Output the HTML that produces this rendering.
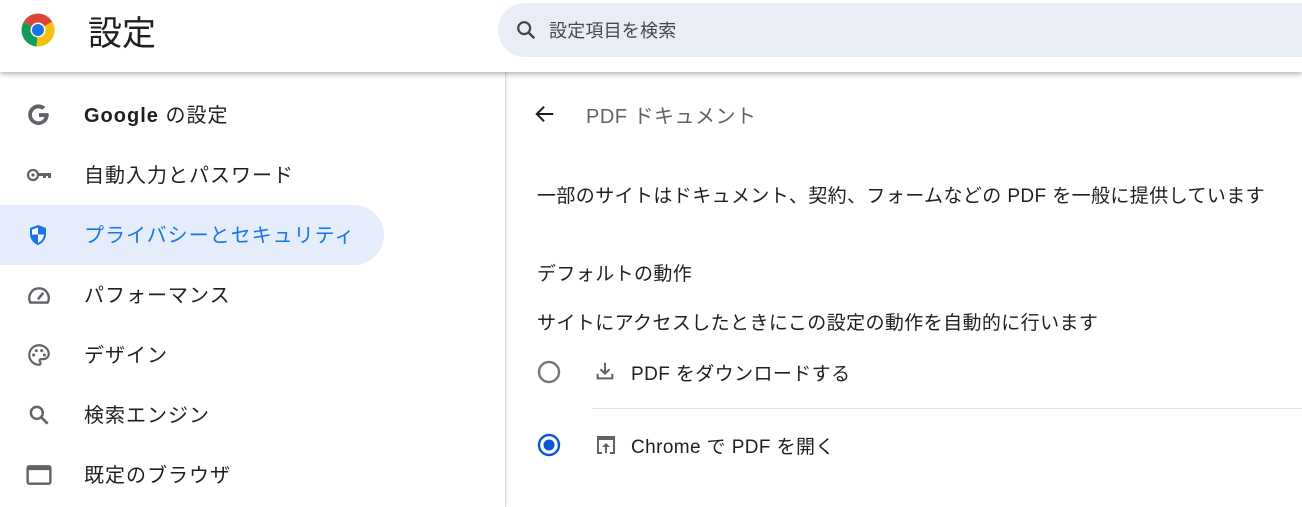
<!DOCTYPE html>
<html><head><meta charset="utf-8"><style>
*{margin:0;padding:0;box-sizing:border-box}
body{width:1302px;height:507px;overflow:hidden;background:#fff;font-family:"Liberation Sans","Noto Sans CJK JP",sans-serif;color:#1f1f1f;position:relative}
.hdr{position:absolute;left:0;top:0;width:1302px;height:72px;background:#fff;box-shadow:0 2px 5px rgba(0,0,0,.3);z-index:2}
.title{position:absolute;left:88px;top:6px;font-size:34px;color:#1f1f1f}
.search{position:absolute;left:498px;top:3px;width:830px;height:54px;border-radius:27px;background:#e9eef6}
.search span{position:absolute;left:51px;top:14px;font-size:18px;color:#474747;letter-spacing:.2px}
.side{position:absolute;left:0;top:72px;width:506px;height:435px;border-right:1px solid #dadce0;box-shadow:1px 0 3px rgba(0,0,0,.08)}
.item{position:absolute;left:0;height:60px;width:384px;font-size:20px;color:#1f1f1f;letter-spacing:1px}
.item .t{position:absolute;left:84px;top:14px;white-space:nowrap}
.item svg{position:absolute;left:26px;top:17px}
.sel{background:#e5edfb;border-radius:0 30px 30px 0;color:#1a73e8}
.c{position:absolute;font-size:19px;color:#1f1f1f;white-space:nowrap;letter-spacing:.4px}
</style></head><body>
<div class="hdr">
<svg style="position:absolute;left:20px;top:12px" width="36" height="36" viewBox="0 0 48 48">
<path d="M24 24 L5 13 A22 22 0 0 1 43 13 Z" fill="#db4437"/>
<path d="M24 24 L43 13 A22 22 0 0 1 22 46 Z" fill="#f4c20d"/>
<path d="M24 24 L22 46 A22 22 0 0 1 5 13 Z" fill="#0f9d58"/>
<circle cx="24" cy="24" r="10" fill="#fff"/><circle cx="24" cy="24" r="8" fill="#1a73e8"/></svg>
<div class="title">設定</div>
<div class="search"><svg style="position:absolute;left:17px;top:16px" width="22" height="22" viewBox="0 0 24 24"><circle cx="10" cy="10" r="6.5" fill="none" stroke="#444" stroke-width="2.4"/><path d="M15 15l6 6" stroke="#444" stroke-width="2.6"/></svg><span>設定項目を検索</span></div>
</div>
<div class="side">
<div class="item" style="top:13px"><svg width="26" height="26" viewBox="0 0 24 24"><path d="M21 12.2c0-.7-.1-1.3-.2-1.9H12v3.6h5a4.3 4.3 0 0 1-1.9 2.8 6 6 0 1 1 .1-9.5l2.6-2.6A9.5 9.5 0 1 0 21 12.2z" fill="#5f6368"/></svg><span class="t" style="font-weight:bold">Google <span style="font-weight:normal">の設定</span></span></div>
<div class="item" style="top:73px"><svg width="28" height="26" viewBox="0 0 28 24"><circle cx="7" cy="12" r="5" fill="none" stroke="#5f6368" stroke-width="2.2"/><circle cx="7" cy="12" r="1.6" fill="#5f6368"/><path d="M12 10h13v5h-3v-2h-2v2h-3v-2h-5z" fill="#5f6368"/></svg><span class="t">自動入力とパスワード</span></div>
<div class="item sel" style="top:133px"><svg width="24" height="26" viewBox="0 0 24 24"><path d="M12 2l8 3v6c0 5-3.4 9.4-8 11-4.6-1.6-8-6-8-11V5z" fill="#1a73e8"/><path d="M12 4.5v7H6V6.5zM12 11.5h6c-.4 3.8-2.8 7-6 8.2z" fill="#fff"/></svg><span class="t">プライバシーとセキュリティ</span></div>
<div class="item" style="top:193px"><svg width="26" height="26" viewBox="0 0 24 24"><path d="M4 19a9 9 0 1 1 16 0z" fill="none" stroke="#5f6368" stroke-width="2.2"/><path d="M11 16l5-6" stroke="#5f6368" stroke-width="2.4"/></svg><span class="t">パフォーマンス</span></div>
<div class="item" style="top:253px"><svg width="26" height="26" viewBox="0 0 24 24"><path d="M12 3a9 9 0 0 0 0 18c1 0 1.5-.7 1.5-1.5 0-1.2-1-1.3-1-2.3 0-.8.7-1.4 1.5-1.4h2A5 5 0 0 0 21 11c0-4.4-4-8-9-8z" fill="none" stroke="#5f6368" stroke-width="2"/><circle cx="7" cy="12" r="1.4" fill="#5f6368"/><circle cx="9.5" cy="8" r="1.4" fill="#5f6368"/><circle cx="14.5" cy="8" r="1.4" fill="#5f6368"/><circle cx="17" cy="12" r="1.4" fill="#5f6368"/></svg><span class="t">デザイン</span></div>
<div class="item" style="top:313px"><svg width="26" height="26" viewBox="0 0 24 24"><circle cx="10" cy="10" r="5.5" fill="none" stroke="#5f6368" stroke-width="2.2"/><path d="M14 14l6 6" stroke="#5f6368" stroke-width="2.4"/></svg><span class="t">検索エンジン</span></div>
<div class="item" style="top:373px"><svg width="26" height="26" viewBox="0 0 24 24"><rect x="1.5" y="4" width="21" height="16" rx="1.5" fill="none" stroke="#5f6368" stroke-width="2.2"/><rect x="1.5" y="4" width="21" height="3.5" fill="#5f6368"/></svg><span class="t">既定のブラウザ</span></div>
</div>
<svg style="position:absolute;left:534px;top:103px" width="22" height="22" viewBox="0 0 24 24"><path d="M21 12H4M11 4l-8 8 8 8" fill="none" stroke="#1f1f1f" stroke-width="2.2"/></svg>
<div class="c" style="left:586px;top:100px;font-size:20px;color:#5f6368;letter-spacing:.5px">PDF ドキュメント</div>
<div class="c" style="left:537px;top:181px">一部のサイトはドキュメント、契約、フォームなどの PDF を一般に提供しています</div>
<div class="c" style="left:537px;top:259px">デフォルトの動作</div>
<div class="c" style="left:537px;top:308px">サイトにアクセスしたときにこの設定の動作を自動的に行います</div>
<svg style="position:absolute;left:536px;top:359px" width="26" height="26"><circle cx="13" cy="13" r="10" fill="none" stroke="#757575" stroke-width="2.4"/></svg>
<svg style="position:absolute;left:594px;top:360px" width="22" height="22" viewBox="0 0 24 24"><path d="M12 3v12M7 10l5 5 5-5M4 15v5h16v-5" fill="none" stroke="#5f6368" stroke-width="2.2"/></svg>
<div class="c" style="left:631px;top:359px">PDF をダウンロードする</div>
<div style="position:absolute;left:592px;top:408px;width:710px;height:1px;background:#e3e3e3"></div>
<svg style="position:absolute;left:536px;top:432px" width="26" height="26"><circle cx="13" cy="13" r="10" fill="none" stroke="#0b57d0" stroke-width="2.4"/><circle cx="13" cy="13" r="5.5" fill="#0b57d0"/></svg>
<svg style="position:absolute;left:594px;top:433px" width="24" height="24" viewBox="0 0 24 24"><path d="M3 3h18v18h-5v-2h3V7H5v12h3v2H3z" fill="#5f6368"/><path d="M12 10l-4 4h3v6h2v-6h3z" fill="#5f6368"/></svg>
<div class="c" style="left:631px;top:432px">Chrome で PDF を開く</div>
</body></html>
